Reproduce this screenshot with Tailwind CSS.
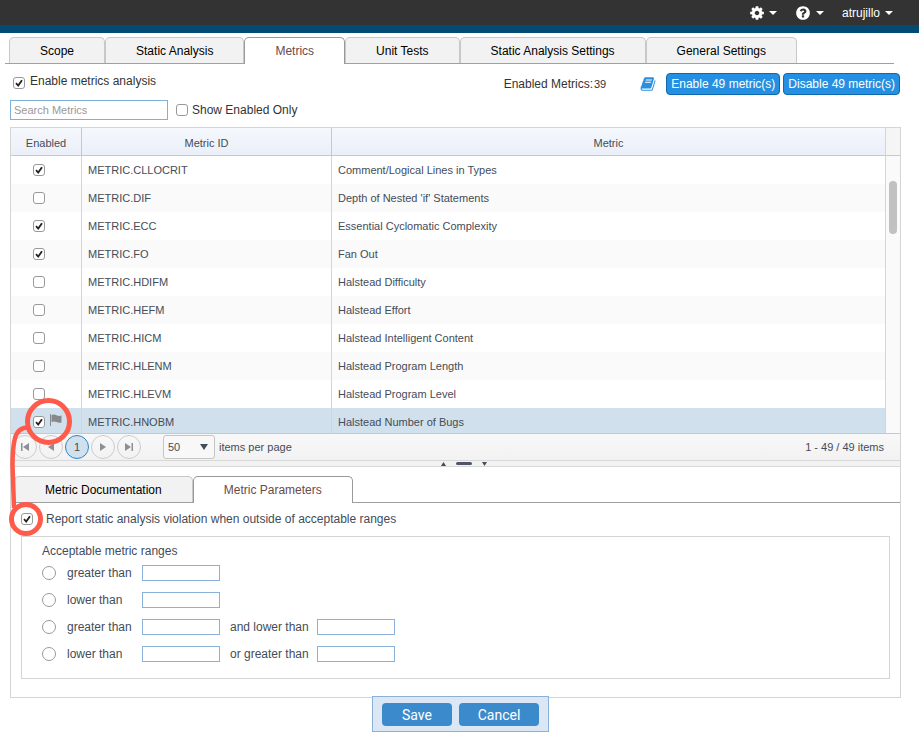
<!DOCTYPE html>
<html lang="en">

<head>
    <meta charset="UTF-8">
    <meta name="viewport" content="width=device-width, initial-scale=1.0">
    <script src="https://cdn.jsdelivr.net/npm/@tailwindcss/browser@4"></script>
    <title>Metrics</title>
</head>

<body class="relative bg-white font-['Liberation_Sans',Arial,sans-serif] text-xs text-[#333]">

    <!-- shared icons -->
    <svg class="hidden" xmlns="http://www.w3.org/2000/svg">
        <symbol id="check" viewBox="0 0 12 12">
            <path d="M3 6.2L5.2 8.6L9 3.2" fill="none" stroke="#222" stroke-width="1.8" />
        </symbol>
        <symbol id="caret" viewBox="0 0 8 4">
            <path d="M0 0h8L4 4z" fill="currentColor" />
        </symbol>
    </svg>

    <header class="flex h-[33px] items-center justify-end border-b-8 border-[#034a75] bg-[#333] pr-[26px] text-white">
        <button class="mr-[18px] flex items-center gap-1" aria-label="Settings">
            <svg class="size-4" viewBox="0 0 1792 1792" fill="currentColor">
                <path d="M1152 896q0-106-75-181t-181-75-181 75-75 181 75 181 181 75 181-75 75-181zm512-109v222q0 12-8 23t-20 13l-185 28q-19 54-39 91 35 50 107 138 10 12 10 25t-9 23q-27 37-99 108t-94 71q-12 0-26-9l-138-108q-44 23-91 38-16 136-29 186-7 28-36 28h-222q-14 0-24.500-8.500t-11.500-21.500l-28-184q-49-16-90-37l-141 107q-10 9-25 9-14 0-25-11-126-114-165-168-7-10-7-23 0-12 8-23 15-21 51-66.500t54-70.500q-27-50-41-99l-183-27q-13-2-21-12.500t-8-23.500v-222q0-12 8-23t19-13l186-28q14-46 39-92-40-57-107-138-10-12-10-24 0-10 9-23 26-36 98.500-107.500t94.500-71.500q13 0 26 10l138 107q44-23 91-38 16-136 29-186 7-28 36-28h222q14 0 24.500 8.500t11.500 21.500l28 184q49 16 90 37l142-107q9-9 24-9 13 0 25 10 129 119 165 170 7 8 7 22 0 12-8 23-15 21-51 66.500t-54 70.500q26 50 41 98l183 28q13 2 21 12.500t8 23.500z" />
            </svg>
            <svg class="h-1 w-2"><use href="#caret" /></svg>
        </button>
        <button class="mr-[18px] flex items-center gap-[5px]" aria-label="Help">
            <svg class="size-4" viewBox="0 0 1792 1792" fill="currentColor">
                <path d="M1024 1376v-192q0-14-9-23t-23-9h-192q-14 0-23 9t-9 23v192q0 14 9 23t23 9h192q14 0 23-9t9-23zm256-672q0-88-55.500-163t-138.500-116-170-41q-243 0-371 213-15 24 8 42l132 100q7 6 19 6 16 0 25-12 53-68 86-92 34-24 86-24 48 0 85.500 26t37.500 59q0 38-20 61t-68 45q-63 28-115.500 86.500t-52.500 125.500v36q0 14 9 23t23 9h192q14 0 23-9t9-23q0-19 21.500-49.500t54.500-49.500q32-18 49-28.500t46-35 44.500-48 28-60.500 12.500-81zm384 192q0 209-103 385.500t-279.500 279.500-385.500 103-385.500-103-279.500-279.500-103-385.500 103-385.500 279.500-279.500 385.500-103 385.500 103 279.500 279.500 103 385.500z" />
            </svg>
            <svg class="h-1 w-2"><use href="#caret" /></svg>
        </button>
        <button class="flex items-center gap-[5px]">
            atrujillo
            <svg class="h-1 w-2"><use href="#caret" /></svg>
        </button>
    </header>

    <nav class="mt-1 mr-[25px] ml-[5px] flex h-[27px] border-b border-[#a0a0a0] pl-1 text-black">
        <button class="rounded-t-[5px] border border-b-0 border-[#c8c8c8] bg-[#f2f2f2] px-[30px]">Scope</button>
        <button class="rounded-t-[5px] border border-b-0 border-[#c8c8c8] bg-[#f2f2f2] px-[30px]">Static Analysis</button>
        <button class="-mb-px rounded-t-[5px] border border-b-0 border-[#999] bg-white px-[30px] text-[#6b4a4a]">Metrics</button>
        <button class="rounded-t-[5px] border border-b-0 border-[#c8c8c8] bg-[#f2f2f2] px-[30px]">Unit Tests</button>
        <button class="rounded-t-[5px] border border-b-0 border-[#c8c8c8] bg-[#f2f2f2] px-[30px]">Static Analysis Settings</button>
        <button class="rounded-t-[5px] border border-b-0 border-[#c8c8c8] bg-[#f2f2f2] px-[30px]">General Settings</button>
    </nav>

    <main class="mr-[18px] ml-[10px] pt-[9px]">
        <div class="flex h-[22px] items-center pr-px">
            <label class="mb-[6px] ml-[3px] flex gap-[5px]">
                <span class="mt-1 grid size-3">
                    <input type="checkbox" checked class="peer col-start-1 row-start-1 size-3 appearance-none rounded-[3px] border border-[#999] bg-white">
                    <svg class="pointer-events-none invisible col-start-1 row-start-1 size-3 peer-checked:visible"><use href="#check" /></svg>
                </span>
                Enable metrics analysis
            </label>
            <div class="ml-auto flex items-center">
                <span>Enabled Metrics:</span>
                <span class="mr-[34px] ml-px text-[11px]">39</span>
                <a href="#" class="mr-[10px] text-[#2a8fe0]" aria-label="Documentation">
                    <svg class="size-4" viewBox="0 0 1792 1792" fill="currentColor">
                        <path d="M1703 478q40 57 18 129l-275 906q-19 64-76.500 107.500t-122.500 43.500h-923q-77 0-148.500-53.500t-99.500-131.500q-24-67-2-127 0-4 3-27t4-37q1-8-3-21.500t-3-19.500q2-11 8-21t16.500-23.500 16.500-23.500q23-38 45-91.500t30-91.500q3-10 .5-30t-.5-28q3-11 17-28t17-23q21-36 42-92t25-90q1-9-2.500-32t.5-28q4-13 22-30.500t22-22.500q19-26 42.500-84.500t27.500-96.500q1-8-3-25.500t-2-26.500q2-8 9-18t18-23 17-21q8-12 16.500-30.500t15-35 16-36 19.500-32 26.500-23.500 36-11.500 47.500 5.500l-1 3q38-9 51-9h761q74 0 114 56t18 130l-274 906q-36 119-71.500 153.500t-128.500 34.500h-869q-27 0-38 15-11 16-1 43 24 70 144 70h923q29 0 56-15.500t35-41.500l300-987q7-22 5-57 38 15 59 43zm-1064 2q-4 13 2 22.500t20 9.500h608q13 0 25.500-9.500t16.500-22.500l21-64q4-13-2-22.500t-20-9.500h-608q-13 0-25.500 9.500t-16.500 22.500zm-83 256q-4 13 2 22.500t20 9.500h608q13 0 25.500-9.500t16.500-22.500l21-64q4-13-2-22.500t-20-9.500h-608q-13 0-25.500 9.500t-16.500 22.500z" />
                    </svg>
                </a>
                <button class="mr-[3px] h-[22px] rounded border border-[#1068b0] bg-[#2590e2] px-1 text-white">Enable 49 metric(s)</button>
                <button class="h-[22px] rounded border border-[#1068b0] bg-[#2590e2] px-1 text-white">Disable 49 metric(s)</button>
            </div>
        </div>

        <div class="mt-[5px] flex items-center">
            <input type="text" placeholder="Search Metrics" aria-label="Search Metrics" class="h-5 w-[158px] border border-[#7fb0d9] px-[3px] text-[11px] placeholder:text-[#999]">
            <label class="ml-2 flex items-center gap-1">
                <input type="checkbox" class="size-3 appearance-none rounded-[3px] border border-[#999] bg-white">
                Show Enabled Only
            </label>
        </div>

        <div class="mt-[7px] border border-[#d5d5d5] text-[#444c58]">
            <!-- metrics grid -->
            <div class="flex h-[305px] overflow-hidden text-[11px]">
                <table class="flex-1 table-fixed border-separate border-spacing-0 self-start">
                    <thead>
                        <tr class="h-7 bg-linear-to-b from-[#f5f8fc] to-[#eaeff8]">
                            <th class="w-[70px] border-b border-[#c8c8cc] p-0 pt-1 font-normal">Enabled</th>
                            <th class="w-[250px] border-b border-l border-[#c8c8cc] p-0 pt-1 font-normal">Metric ID</th>
                            <th class="border-b border-l border-[#c8c8cc] p-0 pt-1 font-normal">Metric</th>
                        </tr>
                    </thead>
                    <tbody id="metrics"></tbody>
                </table>
                <div class="flex w-[15px] flex-col border-l border-[#d5d5d5] bg-[#fafafa]">
                    <div class="h-7 shrink-0 border-b border-[#c8c8cc] bg-[#f5f5f5]"></div>
                    <div class="mt-[25px] ml-[3px] h-[53px] w-2 rounded-full bg-[#c1c1c1]"></div>
                </div>
            </div>

            <!-- pager -->
            <div class="flex h-[27px] items-center border-t border-[#c8c8c8] bg-linear-to-b from-[#f8f8f8] to-[#f2f2f2] pr-4 pl-[2px] text-[11px]">
                <div class="flex gap-[2px]">
                    <button class="grid size-6 place-items-center rounded-full border border-[#ccc]" aria-label="First page">
                        <svg class="size-2" viewBox="0 0 8 8" fill="#8b9097"><path d="M0 0h1.500v8H0zM8 0v8L2 4z" /></svg>
                    </button>
                    <button class="grid size-6 place-items-center rounded-full border border-[#ccc]" aria-label="Previous page">
                        <svg class="size-2" viewBox="0 0 8 8" fill="#8b9097"><path d="M7 0v8L1 4z" /></svg>
                    </button>
                    <button class="grid size-6 place-items-center rounded-full border border-[#2a86c8] bg-[#d1e0ed]">1</button>
                    <button class="grid size-6 place-items-center rounded-full border border-[#ccc]" aria-label="Next page">
                        <svg class="size-2" viewBox="0 0 8 8" fill="#8b9097"><path d="M1 0v8L7 4z" /></svg>
                    </button>
                    <button class="grid size-6 place-items-center rounded-full border border-[#ccc]" aria-label="Last page">
                        <svg class="size-2" viewBox="0 0 8 8" fill="#8b9097"><path d="M6.500 0H8v8H6.500zM0 0v8L6 4z" /></svg>
                    </button>
                </div>
                <div class="ml-[22px] grid items-center">
                    <select id="pageSize" class="col-start-1 row-start-1 h-6 w-[52px] appearance-none rounded-[3px] border border-[#c5c5c5] bg-[#f8f8f8] pl-1">
                        <option>50</option>
                        <option>100</option>
                    </select>
                    <svg class="pointer-events-none col-start-1 row-start-1 mr-[7px] h-[6px] w-2 justify-self-end" viewBox="0 0 8 6"><path d="M0 0h8L4 6z" fill="#444c58" /></svg>
                </div>
                <label for="pageSize" class="ml-1">items per page</label>
                <span class="ml-auto">1 - 49 / 49 items</span>
            </div>

            <!-- splitter -->
            <div class="flex h-[7px] items-center justify-center gap-[10px] border-y border-[#d8d8d8] bg-[#f2f2f2] pl-4">
                <svg class="h-1 w-[5px]" viewBox="0 0 5 4"><path d="M0 4h5L2.500 0z" fill="#444c58" /></svg>
                <span class="h-[3px] w-4 rounded-full bg-[#4d5666]"></span>
                <svg class="h-1 w-[5px]" viewBox="0 0 5 4"><path d="M0 0h5L2.500 4z" fill="#444c58" /></svg>
            </div>

            <div class="mt-[9px] ml-[3px] flex h-[27px] border-b border-[#a0a0a0]">
                <button class="rounded-t-[5px] border border-b-0 border-[#c8c8c8] bg-[#f2f2f2] px-[30px] text-black">Metric Documentation</button>
                <button class="-mb-px rounded-t-[5px] border border-b-0 border-[#999] bg-white px-[30px] text-[#6b4a4a]">Metric Parameters</button>
            </div>

            <label class="mt-2 ml-[10px] flex items-center gap-[13px]">
                <span class="grid size-3">
                    <input type="checkbox" checked class="peer col-start-1 row-start-1 size-3 appearance-none rounded-[3px] border border-[#999] bg-white">
                    <svg class="pointer-events-none invisible col-start-1 row-start-1 size-3 peer-checked:visible"><use href="#check" /></svg>
                </span>
                Report static analysis violation when outside of acceptable ranges
            </label>

            <div class="mx-[10px] mt-[9px] mb-[18px] border border-[#d5d5d5] pt-[6px] pb-[11px] pl-5">
                <p>Acceptable metric ranges</p>
                <div class="flex h-[27px] items-center">
                    <input type="radio" name="range" id="gt" class="mr-[11px] size-[14px] appearance-none rounded-full border border-[#999]">
                    <label for="gt" class="w-[75px]">greater than</label>
                    <input type="text" aria-label="greater than value" class="h-4 w-[78px] border border-[#8ab1d8] px-1">
                </div>
                <div class="flex h-[27px] items-center">
                    <input type="radio" name="range" id="lt" class="mr-[11px] size-[14px] appearance-none rounded-full border border-[#999]">
                    <label for="lt" class="w-[75px]">lower than</label>
                    <input type="text" aria-label="lower than value" class="h-4 w-[78px] border border-[#8ab1d8] px-1">
                </div>
                <div class="flex h-[27px] items-center">
                    <input type="radio" name="range" id="between" class="mr-[11px] size-[14px] appearance-none rounded-full border border-[#999]">
                    <label for="between" class="w-[75px]">greater than</label>
                    <input type="text" aria-label="lower bound" class="mr-[10px] h-4 w-[78px] border border-[#8ab1d8] px-1">
                    <label for="upper" class="w-[87px]">and lower than</label>
                    <input type="text" id="upper" class="h-4 w-[78px] border border-[#8ab1d8] px-1">
                </div>
                <div class="flex h-[27px] items-center">
                    <input type="radio" name="range" id="outside" class="mr-[11px] size-[14px] appearance-none rounded-full border border-[#999]">
                    <label for="outside" class="w-[75px]">lower than</label>
                    <input type="text" aria-label="low limit" class="mr-[10px] h-4 w-[78px] border border-[#8ab1d8] px-1">
                    <label for="high" class="w-[87px]">or greater than</label>
                    <input type="text" id="high" class="h-4 w-[78px] border border-[#8ab1d8] px-1">
                </div>
            </div>
        </div>
    </main>

    <div class="pl-[2px]">
        <div class="relative mx-auto -mt-[2px] flex w-fit gap-[7px] border border-[#8ab1d8] bg-[#dbe7f4] px-[9px] pt-[6px] pb-[5px] font-[Roboto,sans-serif] text-sm text-white">
            <button class="h-[23px] w-[70px] rounded bg-[#3b8acb]">Save</button>
            <button class="h-[23px] w-20 rounded bg-[#3b8acb]">Cancel</button>
        </div>
    </div>

    <!-- callout joining the flagged metric and its report option -->
    <svg class="pointer-events-none absolute top-[390px] left-0 h-[150px] w-20" viewBox="0 390 80 150" fill="none" stroke="#ff5a4a">
        <circle cx="48.500" cy="421.500" r="21" stroke-width="5" />
        <circle cx="26" cy="519" r="14.500" stroke-width="5" />
        <path d="M28 427.500Q18 427.500 15 438Q12.500 448 12.500 465L14 508" stroke-width="4.500" />
    </svg>
</body>
<script>
const metrics = [
    ['METRIC.CLLOCRIT', 'Comment/Logical Lines in Types', true],
    ['METRIC.DIF', "Depth of Nested 'if' Statements", false],
    ['METRIC.ECC', 'Essential Cyclomatic Complexity', true],
    ['METRIC.FO', 'Fan Out', true],
    ['METRIC.HDIFM', 'Halstead Difficulty', false],
    ['METRIC.HEFM', 'Halstead Effort', false],
    ['METRIC.HICM', 'Halstead Intelligent Content', false],
    ['METRIC.HLENM', 'Halstead Program Length', false],
    ['METRIC.HLEVM', 'Halstead Program Level', false],
    ['METRIC.HNOBM', 'Halstead Number of Bugs', true, 'selected'],
];

const flag = '<svg class="mb-1 size-3" viewBox="0 0 12 12" fill="#85898d"><path d="M0 0h1v12H0zM1.500 1Q4 0 6.500 1.200T11.500 1.500V8.500Q9 9.200 6.500 8T1.500 8z" /></svg>';

// build the grid rows, the selected one is highlighted and carries a flag
document.getElementById('metrics').innerHTML = metrics.map(([id, name, enabled, selected]) => `
    <tr class="h-7 ${selected ? 'bg-[#d1e0ed]' : 'even:bg-[#fafafa]'}">
        <td class="p-0 pl-[22px]">
            <div class="flex items-center gap-[5px]">
                <span class="grid size-3">
                    <input type="checkbox" ${enabled ? 'checked' : ''} aria-label="${id}" class="peer col-start-1 row-start-1 size-3 appearance-none rounded-[3px] border border-[#999] bg-white">
                    <svg class="pointer-events-none invisible col-start-1 row-start-1 size-3 peer-checked:visible"><use href="#check" /></svg>
                </span>
                ${selected ? flag : ''}
            </div>
        </td>
        <td class="border-l border-[#d5d5d5] p-0 pl-[6px]">${id}</td>
        <td class="border-l border-[#d5d5d5] p-0 pl-[6px]">${name}</td>
    </tr>`).join('');
</script>

</html>
